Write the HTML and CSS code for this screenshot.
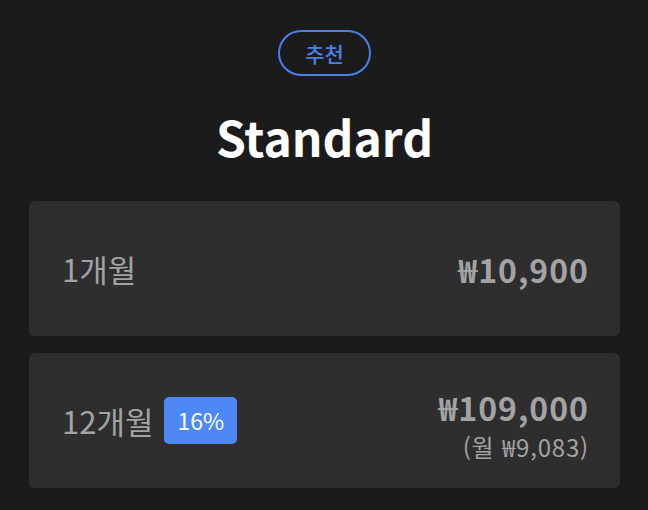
FILE: index.html
```html
<!DOCTYPE html>
<html lang="ko">
<head>
<meta charset="UTF-8">
<meta name="viewport" content="width=device-width, initial-scale=1.0">
<title>Standard</title>
<link rel="stylesheet" href="styles.css">
</head>
<body>
<div class="plan">
  <div class="plan-head">
    <span class="tag">추천</span>
    <h1 class="plan-name">Standard</h1>
  </div>
  <div class="options">
    <div class="option">
      <div class="period">1개월</div>
      <div class="price">
        <div class="amount">₩10,900</div>
      </div>
    </div>
    <div class="option">
      <div class="period">12개월<span class="discount">16%</span></div>
      <div class="price price-split">
        <div class="amount">₩109,000</div>
        <div class="monthly">(월 ₩9,083)</div>
      </div>
    </div>
  </div>
</div>
</body>
</html>
```

FILE: styles.css
```css
body {
  margin: 0;
  background: #1b1b1b;
  font-family: "Noto Sans CJK KR", "Noto Sans", sans-serif;
  color: #a3a3a3;
}
.plan {
  padding: 30px 28px 20px 29px;
}
.plan-head {
  display: flex;
  flex-direction: column;
  align-items: center;
}
.tag {
  border: 2px solid #4a80ec;
  border-radius: 24px;
  color: #4a80ec;
  font-size: 21px;
  font-weight: 500;
  line-height: 28px;
  padding: 7px 25px;
}
.plan-name {
  margin: 36px 0 41px;
  color: #fff;
  font-size: 48px;
  font-weight: 700;
  line-height: 1;
}
.options {
  display: flex;
  flex-direction: column;
  gap: 17px;
}
.option {
  background: #2e2e2e;
  border-radius: 6px;
  height: 135px;
  padding: 0 31px 0 33px;
  display: flex;
  align-items: center;
  justify-content: space-between;
}
.period {
  font-size: 31px;
  display: flex;
  align-items: center;
  gap: 11px;
}
.discount {
  background: #4d88f5;
  color: #fff;
  border-radius: 5px;
  font-size: 23px;
  line-height: 47px;
  padding: 0 13px;
}
.price {
  text-align: right;
}
.price-split {
  padding-top: 8px;
}
.amount {
  font-size: 32px;
  font-weight: 700;
  line-height: 36px;
  letter-spacing: 1px;
}
.monthly {
  font-size: 24px;
  line-height: 26px;
  margin-top: 9px;
  letter-spacing: 0.8px;
}
```
